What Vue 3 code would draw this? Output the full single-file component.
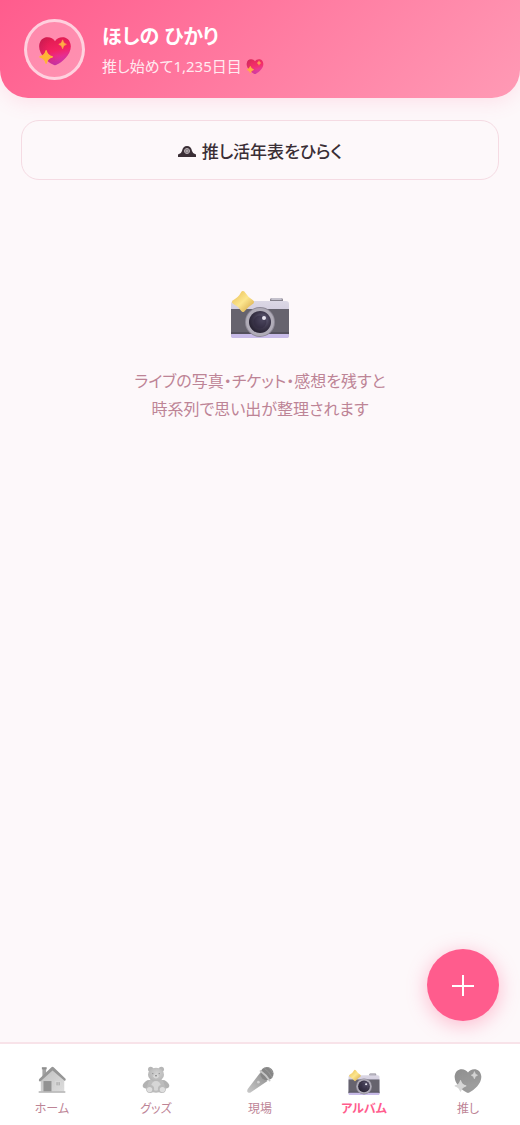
<script setup>
import { ref } from "vue";

const oshi = {
  name: "ほしの ひかり",
  days: 1235,
};

const tabs = [
  { id: "home", label: "ホーム" },
  { id: "goods", label: "グッズ" },
  { id: "live", label: "現場" },
  { id: "album", label: "アルバム" },
  { id: "heart", label: "推し" },
];

const current = ref("album");
</script>

<template>
  <svg class="sprite" aria-hidden="true">
    <defs>
      <linearGradient id="g-heart" x1="0.3" y1="0" x2="0.6" y2="1">
        <stop offset="0" stop-color="#df1b4e" />
        <stop offset="0.5" stop-color="#f32263" />
        <stop offset="1" stop-color="#d93bc5" />
      </linearGradient>
      <radialGradient id="g-shade" cx="0.62" cy="0.35" r="0.65">
        <stop offset="0.5" stop-color="#a3184c" stop-opacity="0" />
        <stop offset="1" stop-color="#8f1c5b" stop-opacity="0.3" />
      </radialGradient>
      <linearGradient id="g-star" x1="0" y1="0" x2="1" y2="1">
        <stop offset="0" stop-color="#ecc35c" />
        <stop offset="0.5" stop-color="#fce68f" />
        <stop offset="1" stop-color="#d9ac4c" />
      </linearGradient>
      <linearGradient id="g-metal" x1="0" y1="0" x2="0" y2="1">
        <stop offset="0" stop-color="#dcd8e5" />
        <stop offset="1" stop-color="#b9b1ce" />
      </linearGradient>
      <radialGradient id="g-lens" cx="0.6" cy="0.4" r="0.6">
        <stop offset="0" stop-color="#74708c" />
        <stop offset="0.6" stop-color="#3e384d" />
        <stop offset="1" stop-color="#292434" />
      </radialGradient>
      <linearGradient id="g-wall" x1="0" y1="0" x2="1" y2="1">
        <stop offset="0" stop-color="#c0c0c0" />
        <stop offset="1" stop-color="#dddddd" />
      </linearGradient>
      <linearGradient id="g-mic" x1="1" y1="0" x2="0" y2="1">
        <stop offset="0" stop-color="#8e8e8e" />
        <stop offset="1" stop-color="#c9c9c9" />
      </linearGradient>
      <radialGradient id="g-fur" cx="0.55" cy="0.4" r="0.6">
        <stop offset="0" stop-color="#d2d2d2" />
        <stop offset="1" stop-color="#b4b4b4" />
      </radialGradient>
    </defs>

    <symbol id="icon-heart" viewBox="0 0 60 60">
      <path d="M30 16C25 7 6 6 5 24c0 14 14 25 22 29q3 2 6 0c8-4 22-15 22-29C54 6 35 7 30 16Z" fill="url(#g-heart)" />
      <path d="M30 16C25 7 6 6 5 24c0 14 14 25 22 29q3 2 6 0c8-4 22-15 22-29C54 6 35 7 30 16Z" fill="url(#g-shade)" />
      <path d="M42 14q1 6 6 7-5 1-6 7-1-6-6-7 5-1 6-7Z" fill="#ffad45" stroke="#ffad45" />
      <path d="M16 31q2 8 10 10-8 2-10 10-2-8-10-10 8-2 10-10Z" fill="#ffb536" stroke="#ffb536" stroke-width="2" stroke-linejoin="round" />
    </symbol>

    <symbol id="icon-album" viewBox="0 0 60 60">
      <rect x="40" y="18" width="13" height="6" rx="2" fill="#85818c" />
      <rect x="41" y="18" width="11" height="2" rx="1" fill="#c4c1cc" />
      <rect x="1" y="21" width="58" height="37" rx="3" fill="url(#g-metal)" />
      <rect x="1" y="29" width="58" height="25" fill="#66636e" />
      <rect x="1" y="52" width="58" height="2" fill="#54515d" />
      <rect x="1" y="54" width="58" height="4" rx="2" fill="#c8bbe8" />
      <circle cx="30" cy="42" r="15" fill="#8d8896" />
      <circle cx="30" cy="42" r="14" fill="#b0acb8" />
      <circle cx="30" cy="42" r="11" fill="url(#g-lens)" />
      <circle cx="30" cy="42" r="6.5" fill="#302a40" opacity="0.6" />
      <circle cx="34" cy="38" r="2" fill="#e9e6f1" />
      <path d="M13 13q4 6 9 9-5 3-9 8-3-5-9-8 6-3 9-9Z" fill="url(#g-star)" stroke="url(#g-star)" stroke-width="4" stroke-linejoin="round" />
    </symbol>

    <symbol id="icon-home" viewBox="0 0 60 60">
      <path d="M12 8h7v22h-7Z" fill="#a3a3a3" />
      <path d="M11 6h9v4h-9Z" fill="#8f8f8f" />
      <path d="M9 29 31 9l22 20v23H9Z" fill="url(#g-wall)" />
      <path d="M29 6q2-2 4 0l22 21q2 3-1 5L31 12 8 33q-4-1-2-5Z" fill="#969696" />
      <rect x="14" y="32" width="15" height="20" fill="#929292" />
      <rect x="36" y="32" width="11" height="10" rx="1" fill="#d8d8d8" />
      <path d="M38 34h7v6h-7Z" fill="#b4b4b4" />
      <path d="M41 34h1v6h-1Z" fill="#d8d8d8" />
      <path d="M5 51h50v3H5Z" fill="#b6b6b6" />
    </symbol>

    <symbol id="icon-goods" viewBox="0 0 60 60">
      <circle cx="20" cy="10" r="5" fill="#b6b6b6" />
      <circle cx="40" cy="10" r="5" fill="#b6b6b6" />
      <ellipse cx="14" cy="38" rx="10" ry="6.5" transform="rotate(-35 14 38)" fill="#b2b2b2" />
      <ellipse cx="46" cy="38" rx="10" ry="6.5" transform="rotate(35 46 38)" fill="#b2b2b2" />
      <ellipse cx="30" cy="40" rx="16" ry="14" fill="#bcbcbc" />
      <ellipse cx="30" cy="20" rx="15" ry="13" fill="url(#g-fur)" />
      <circle cx="30" cy="41" r="9" fill="#d6d6d6" />
      <circle cx="19" cy="47" r="7.5" fill="#bababa" />
      <circle cx="41" cy="47" r="7.5" fill="#bababa" />
      <circle cx="18" cy="48" r="5" fill="#dedede" />
      <circle cx="42" cy="48" r="5" fill="#dedede" />
      <ellipse cx="30" cy="23" rx="5" ry="4" fill="#d8d8d8" />
      <circle cx="24" cy="18" r="1.2" fill="#888888" />
      <circle cx="36" cy="18" r="1.2" fill="#888888" />
      <ellipse cx="30" cy="22" rx="2" ry="1.4" fill="#888888" />
    </symbol>

    <symbol id="icon-live" viewBox="0 0 60 60">
      <path d="m30 17 14 15-31 21q-3 2-6 0-2-2 0-6Z" fill="url(#g-mic)" />
      <circle cx="27" cy="34" r="2.5" fill="#d0d0d0" />
      <circle cx="43" cy="18" r="12.5" fill="#868686" />
      <path d="M38 8q9 5 15 18M45 6q6 4 9 11" fill="none" stroke="#9c9c9c" stroke-width="1.5" />
      <path d="M31 13q10 7 17 18" fill="none" stroke="#c6c6c6" stroke-width="3.5" stroke-linecap="round" />
    </symbol>
  </svg>

  <div class="page">
    <header class="header">
      <div class="avatar">
        <svg><use href="#icon-heart" /></svg>
      </div>
      <div>
        <h1>{{ oshi.name }}</h1>
        <p class="days">
          推し始めて{{ oshi.days.toLocaleString("en-US") }}日目
          <svg><use href="#icon-heart" /></svg>
        </p>
      </div>
    </header>

    <main>
      <button class="timeline">
        <svg viewBox="0 0 18 16" aria-hidden="true">
          <path d="M0 15v-2q0-1 1-1 2 0 3-3 1-5 5-5t5 5q1 3 3 3 1 0 1 1v2Z" fill="currentColor" />
          <circle cx="9" cy="9" r="2.5" fill="none" stroke="#fdf8fa" stroke-width="0.7" />
          <path d="M9 7v4M7 9h4" stroke="#fdf8fa" stroke-width="0.7" />
        </svg>
        <span>推し活年表をひらく</span>
      </button>

      <div class="empty">
        <svg><use href="#icon-album" /></svg>
        <p>ライブの写真・チケット・感想を残すと<br />時系列で思い出が整理されます</p>
      </div>
    </main>

    <button class="fab" aria-label="追加">
      <svg viewBox="0 0 24 24"><path d="M12 2v21M1 13h22" /></svg>
    </button>

    <nav class="tabbar">
      <button
        v-for="tab in tabs"
        :key="tab.id"
        :class="[tab.id, { active: tab.id === current }]"
        @click="current = tab.id"
      >
        <svg><use :href="'#icon-' + tab.id" /></svg>
        <span>{{ tab.label }}</span>
      </button>
    </nav>
  </div>
</template>

<style>
body {
  margin: 0;
  background: #fdf8fa;
}
</style>

<style scoped>
.sprite {
  position: absolute;
  width: 0;
  height: 0;
}
.page {
  min-height: 100vh;
  box-sizing: border-box;
  padding-bottom: 84px;
  background: #fdf8fa;
  color: #3a2e35;
  font-family: "Noto Sans", "Noto Sans CJK JP", sans-serif;
  font-feature-settings: "palt";
}
button {
  font: inherit;
  font-feature-settings: inherit;
  cursor: pointer;
}
.header {
  display: flex;
  align-items: center;
  gap: 17px;
  padding: 19px 24px 18px;
  border-radius: 0 0 28px 28px;
  background: linear-gradient(135deg, #ff5c8d, #ff9ab5);
  box-shadow: 0 4px 20px rgba(255, 92, 141, 0.15);
  color: #fff;
}
.avatar {
  display: flex;
  align-items: center;
  justify-content: center;
  box-sizing: border-box;
  width: 61px;
  height: 61px;
  border: 3px solid rgba(255, 255, 255, 0.6);
  border-radius: 50%;
  background: rgba(255, 255, 255, 0.25);
}
.avatar svg {
  width: 38px;
  height: 38px;
}
h1 {
  margin: 0;
  padding-top: 3px;
  font-size: 20px;
  line-height: 30px;
  font-weight: 700;
}
.days {
  display: flex;
  align-items: center;
  gap: 3px;
  margin: 0;
  font-size: 15px;
  line-height: 28px;
  opacity: 0.85;
}
.days svg {
  width: 20px;
  height: 20px;
}
main {
  padding: 22px 21px;
}
.timeline {
  display: flex;
  align-items: center;
  justify-content: center;
  gap: 6px;
  width: 100%;
  height: 60px;
  border: 1px solid #f5dbe3;
  border-radius: 18px;
  background: #fdf8fa;
  color: #3a2e35;
  font-size: 17px;
  font-weight: 500;
}
.timeline svg {
  width: 18px;
  height: 16px;
}
.empty {
  display: flex;
  flex-direction: column;
  align-items: center;
  gap: 27px;
  padding-top: 100px;
  text-align: center;
}
.empty svg {
  width: 60px;
  height: 60px;
}
.empty p {
  margin: 0;
  color: #bd8496;
  font-size: 16px;
  line-height: 28px;
}
.fab {
  position: fixed;
  right: 21px;
  bottom: 104px;
  display: flex;
  align-items: center;
  justify-content: center;
  width: 72px;
  height: 72px;
  padding: 0;
  border: none;
  border-radius: 50%;
  background: #ff5c8d;
  box-shadow: 0 4px 20px rgba(255, 92, 141, 0.4);
}
.fab svg {
  width: 24px;
  height: 24px;
  fill: none;
  stroke: #fff;
  stroke-width: 2;
}
.tabbar {
  position: fixed;
  right: 0;
  bottom: 0;
  left: 0;
  display: flex;
  box-sizing: border-box;
  height: 83px;
  border-top: 2px solid #f8e3e9;
  background: #fff;
}
.tabbar button {
  display: flex;
  flex: 1;
  flex-direction: column;
  align-items: center;
  gap: 3px;
  padding: 20px 0 0;
  border: none;
  background: none;
  color: #bd8496;
  font-size: 12px;
  line-height: 20px;
}
.tabbar svg {
  width: 32px;
  height: 32px;
  filter: grayscale(1);
}
.tabbar .heart svg {
  filter: grayscale(1) opacity(0.6);
}
.tabbar .active {
  color: #ff5c8d;
  font-weight: 700;
}
.tabbar .active svg {
  filter: none;
}
</style>
